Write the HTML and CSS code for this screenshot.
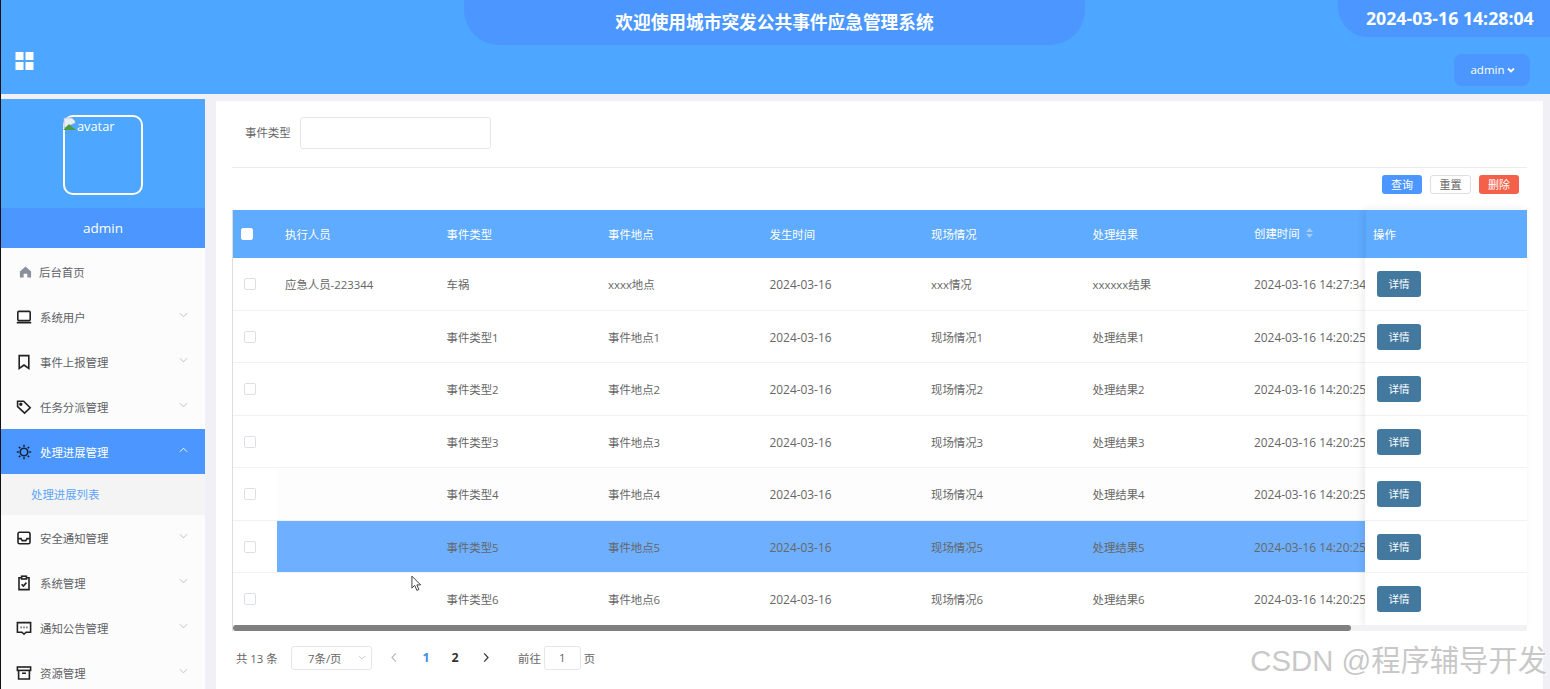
FILE: index.html
```html
<!DOCTYPE html>
<html lang="zh-CN">
<head>
<meta charset="utf-8">
<title>城市突发公共事件应急管理系统</title>
<link rel="stylesheet" href="styles.css">
</head>
<body>
<header class="topbar">
  <div class="top-row">
    <div class="top-spacer"></div>
    <h1 class="title">欢迎使用城市突发公共事件应急管理系统</h1>
    <div class="clock">2024-03-16 14:28:04</div>
  </div>
  <div class="tool-row">
    <svg class="grid-icon" viewBox="0 0 18 18"><rect width="8" height="8" rx=".3"/><rect x="10" width="8" height="8" rx=".3"/><rect y="10" width="8" height="8" rx=".3"/><rect x="10" y="10" width="8" height="8" rx=".3"/></svg>
    <div class="user-btn">admin<svg class="user-caret" viewBox="0 0 10 10"><path d="M2 3.5 5 6.5 8 3.5"/></svg></div>
  </div>
</header>
<div class="body-row">
  <aside class="sidebar">
    <div class="profile">
      <div class="avatar">
        <svg class="broken" viewBox="0 0 14 14"><path d="M1 1h8l3 3v2L1 11z" fill="#e8eef6" stroke="#aab4c0" stroke-width=".7"/><path d="M0 13 6 7l3 3 4 3z" fill="#4f9a3c"/></svg><span>avatar</span>
      </div>
    </div>
    <div class="profile-name">admin</div>
    <nav class="menu">
      <a class="item">
        <svg class="ico home" viewBox="0 0 14 14"><path d="M7 1.2 13 6.4V13H9V9H5v4H1V6.4z" fill="#8a919c"/></svg>
        <span class="lbl">后台首页</span>
      </a>
      <a class="item">
        <svg class="ico" viewBox="0 0 16 16"><rect x="1.800" y="2.400" width="12.400" height="9.200" rx="1"/><path d="M.8 13.600h14.400" stroke-width="1.800"/></svg>
        <span class="lbl">系统用户</span>
        <svg class="chev" viewBox="0 0 10 6"><path d="M1 1 5 5 9 1"/></svg>
      </a>
      <a class="item">
        <svg class="ico" viewBox="0 0 16 16"><path d="M3.200 1.600h9.600v12.800L8 11 3.200 14.400z"/></svg>
        <span class="lbl">事件上报管理</span>
        <svg class="chev" viewBox="0 0 10 6"><path d="M1 1 5 5 9 1"/></svg>
      </a>
      <a class="item">
        <svg class="ico" viewBox="0 0 16 16"><path d="M1.600 2.200h6l6.600 6.600-5.600 5.400-7-6.600z"/><circle cx="4.800" cy="5.200" r=".9"/></svg>
        <span class="lbl">任务分派管理</span>
        <svg class="chev" viewBox="0 0 10 6"><path d="M1 1 5 5 9 1"/></svg>
      </a>
      <a class="item active">
        <svg class="ico" viewBox="0 0 16 16"><circle cx="8" cy="8" r="3.800"/><path d="M8 .8v2M8 13.200v2M.8 8h2M13.200 8h2M2.900 2.900l1.400 1.400M11.700 11.700l1.400 1.400M2.900 13.100l1.400-1.400M11.700 4.300l1.400-1.400"/></svg>
        <span class="lbl">处理进展管理</span>
        <svg class="chev" viewBox="0 0 10 6"><path d="M1 5 5 1 9 5"/></svg>
      </a>
      <a class="subitem">处理进展列表</a>
      <a class="item">
        <svg class="ico" viewBox="0 0 16 16"><rect x="2" y="2.200" width="12" height="11.600" rx="1.600"/><path d="M2 8.600h3l1.200 2h3.600l1.200-2h3"/></svg>
        <span class="lbl">安全通知管理</span>
        <svg class="chev" viewBox="0 0 10 6"><path d="M1 1 5 5 9 1"/></svg>
      </a>
      <a class="item">
        <svg class="ico" viewBox="0 0 16 16"><path d="M5.400 2.800H3v11.800h10V2.800h-2.400"/><rect x="5.600" y="1.200" width="4.800" height="2.800"/><path d="M5.600 9.200 7.400 11l3-3.400"/></svg>
        <span class="lbl">系统管理</span>
        <svg class="chev" viewBox="0 0 10 6"><path d="M1 1 5 5 9 1"/></svg>
      </a>
      <a class="item">
        <svg class="ico" viewBox="0 0 16 16"><path d="M1.400 2.600h13.200v9.600H10L8 14.200 6 12.200H1.400z"/><path d="M4.600 7.400h1M7.500 7.400h1M10.400 7.400h1" stroke-width="1.600"/></svg>
        <span class="lbl">通知公告管理</span>
        <svg class="chev" viewBox="0 0 10 6"><path d="M1 1 5 5 9 1"/></svg>
      </a>
      <a class="item">
        <svg class="ico" viewBox="0 0 16 16"><rect x="1.400" y="2" width="13.200" height="3.400"/><path d="M2.600 5.400V14h10.800V5.400M6 8.200h4"/></svg>
        <span class="lbl">资源管理</span>
        <svg class="chev" viewBox="0 0 10 6"><path d="M1 1 5 5 9 1"/></svg>
      </a>
    </nav>
  </aside>
  <main class="content">
    <form class="filter">
      <label class="filter-label">事件类型</label>
      <div class="filter-input"></div>
    </form>
    <div class="actions">
      <button type="button" class="btn btn-primary">查询</button>
      <button type="button" class="btn btn-plain">重置</button>
      <button type="button" class="btn btn-danger">删除</button>
    </div>
    <section class="table">
      <div class="table-body">
        <div class="scroll-part">
          <div class="tr th">
            <div class="c-check"><span class="cb cb-head"></span></div>
            <div class="td">执行人员</div><div class="td">事件类型</div><div class="td">事件地点</div><div class="td">发生时间</div><div class="td">现场情况</div><div class="td">处理结果</div>
            <div class="td td-sort">创建时间<svg class="sort" viewBox="0 0 8 12"><path d="M4 1 7.500 5H.5zM4 11 .5 7h7z"/></svg></div>
          </div>
          <div class="tr">
            <div class="c-check"><span class="cb"></span></div>
            <div class="td">应急人员-223344</div><div class="td">车祸</div><div class="td">xxxx地点</div><div class="td td-num">2024-03-16</div><div class="td">xxx情况</div><div class="td">xxxxxx结果</div><div class="td td-num">2024-03-16 14:27:34</div>
          </div>
          <div class="tr">
            <div class="c-check"><span class="cb"></span></div>
            <div class="td"></div><div class="td">事件类型1</div><div class="td">事件地点1</div><div class="td td-num">2024-03-16</div><div class="td">现场情况1</div><div class="td">处理结果1</div><div class="td td-num">2024-03-16 14:20:25</div>
          </div>
          <div class="tr">
            <div class="c-check"><span class="cb"></span></div>
            <div class="td"></div><div class="td">事件类型2</div><div class="td">事件地点2</div><div class="td td-num">2024-03-16</div><div class="td">现场情况2</div><div class="td">处理结果2</div><div class="td td-num">2024-03-16 14:20:25</div>
          </div>
          <div class="tr">
            <div class="c-check"><span class="cb"></span></div>
            <div class="td"></div><div class="td">事件类型3</div><div class="td">事件地点3</div><div class="td td-num">2024-03-16</div><div class="td">现场情况3</div><div class="td">处理结果3</div><div class="td td-num">2024-03-16 14:20:25</div>
          </div>
          <div class="tr stripe">
            <div class="c-check"><span class="cb"></span></div>
            <div class="td"></div><div class="td">事件类型4</div><div class="td">事件地点4</div><div class="td td-num">2024-03-16</div><div class="td">现场情况4</div><div class="td">处理结果4</div><div class="td td-num">2024-03-16 14:20:25</div>
          </div>
          <div class="tr hover">
            <div class="c-check"><span class="cb"></span></div>
            <div class="td"></div><div class="td">事件类型5</div><div class="td">事件地点5</div><div class="td td-num">2024-03-16</div><div class="td">现场情况5</div><div class="td">处理结果5</div><div class="td td-num">2024-03-16 14:20:25</div>
          </div>
          <div class="tr">
            <div class="c-check"><span class="cb"></span></div>
            <div class="td"></div><div class="td">事件类型6</div><div class="td">事件地点6</div><div class="td td-num">2024-03-16</div><div class="td">现场情况6</div><div class="td">处理结果6</div><div class="td td-num">2024-03-16 14:20:25</div>
          </div>
        </div>
        <div class="fixed-part">
          <div class="fx th">操作</div>
          <div class="fx"><span class="detail">详情</span></div>
          <div class="fx"><span class="detail">详情</span></div>
          <div class="fx"><span class="detail">详情</span></div>
          <div class="fx"><span class="detail">详情</span></div>
          <div class="fx"><span class="detail">详情</span></div>
          <div class="fx"><span class="detail">详情</span></div>
          <div class="fx"><span class="detail">详情</span></div>
        </div>
      </div>
      <div class="scrollbar"><div class="thumb"></div></div>
    </section>
    <div class="pager">
      <span class="total">共 13 条</span>
      <div class="size">7条/页<svg class="size-caret" viewBox="0 0 10 6"><path d="M1 1 5 5 9 1"/></svg></div>
      <svg class="pg-arrow dim" viewBox="0 0 8 12"><path d="M6 1.500 1.800 6 6 10.500"/></svg>
      <span class="pg pg-on">1</span>
      <span class="pg">2</span>
      <svg class="pg-arrow" viewBox="0 0 8 12"><path d="M2 1.500 6.200 6 2 10.500"/></svg>
      <span class="goto">前往</span>
      <span class="goto-box">1</span>
      <span class="goto-end">页</span>
    </div>
  </main>
</div>
<svg class="cursor" viewBox="0 0 12 18"><path d="M1 1v13l3-3 2.400 5.500 2.200-1L6.400 10.500H10.500z" fill="#fff" stroke="#333" stroke-width="1"/></svg>
<div class="watermark">CSDN @程序辅导开发</div>
</body>
</html>
```
FILE: styles.css
```css
* { box-sizing: border-box; }
html, body { margin: 0; height: 689px; overflow: hidden; }
body {
  position: relative;
  background: #f0f0f6;
  border-left: 1px solid #111;
  font-family: "Open Sans", "Noto Sans CJK SC", sans-serif;
  font-size: 11.4px;
  color: #666;
}
.topbar { height: 94px; background: #4da6ff; color: #fff; }
.top-row { display: grid; grid-template-columns: 463px 621px 1fr; height: 54px; align-items: start; }
.title {
  margin: 0; height: 45px; line-height: 45px; text-align: center;
  background: #4b97ff; border-radius: 0 0 35px 35px;
  font-size: 17.7px; font-weight: 700; color: #fff;
}
.clock {
  justify-self: end; width: 212px; height: 37px; line-height: 36px; padding-left: 28px;
  background: #4b97ff; border-radius: 0 0 0 30px;
  font-family: "Open Sans", sans-serif;
  font-size: 17.7px; font-weight: 700; white-space: nowrap;
}
.tool-row { display: flex; justify-content: space-between; padding: 0 20px 0 14px; }
.grid-icon { width: 19px; height: 18px; margin-top: -2px; fill: #fff; }
.user-btn {
  width: 76px; height: 32px; display: flex; align-items: center; justify-content: center;
  padding: 0 0 2px 2px;
  background: #4b97ff; border-radius: 8px; font-size: 11.5px; color: #fff;
}
.user-caret { width: 10px; height: 10px; fill: none; stroke: #fff; stroke-width: 1.8; margin: 2px 0 0 1px; }

.body-row { display: flex; height: 595px; padding-top: 5px; }
.sidebar { width: 204px; flex: none; background: #fcfcfc; overflow: hidden; }
.profile { height: 109px; background: #4da6ff; padding: 16px 0 0 62px; }
.avatar {
  width: 80px; height: 80px; border: 2px solid #fff; border-radius: 10px;
  display: flex; align-items: flex-start; color: #fff; font-size: 12.8px; line-height: 18px;
}
.broken { width: 14px; height: 14px; flex: none; margin: 0 0 0 -2px; }
.profile-name { height: 40px; line-height: 40px; text-align: center; background: #4b97ff; color: #fff; font-size: 13.5px; }
.menu { padding-top: 1px; }
.item { height: 45px; display: flex; align-items: center; padding-left: 15px; position: relative; color: #606266; }
.item .lbl { margin-left: 8px; }
.ico { width: 16px; height: 16px; flex: none; fill: none; stroke: #222; stroke-width: 1.6; }
.ico.home { stroke: none; margin-left: 3px; width: 13px; height: 14px; margin-right: -1px; }
.chev { width: 9px; height: 6px; fill: none; stroke: #bbb; stroke-width: 1; margin-left: auto; margin-right: 17px; margin-top: -4px; }
.item.active { background: #4b97ff; color: #fff; }
.item.active .chev { stroke: #fff; }
.item.active .ico { stroke: #10243f; }
.subitem { display: block; height: 41px; line-height: 41px; padding-left: 30px; background: #f4f4f4; color: #5ea6f7; }

.content { width: 1327px; margin: 2px 0 0 11px; background: #fff; padding: 0 16px; position: relative; }
.filter { height: 67px; padding-top: 16px; display: flex; align-items: flex-start; border-bottom: 1px solid #ececec; }
.filter-label { margin-left: 13px; line-height: 32px; }
.filter-input { width: 191px; height: 32px; margin-left: 9px; border: 1px solid #e4e7ed; border-radius: 3px; }
.actions { display: flex; justify-content: flex-end; gap: 8px; padding: 7px 8px 0 0; height: 42px; }
.btn { width: 40px; height: 19px; padding: 0; border: 1px solid transparent; border-radius: 3px; font: inherit; font-size: 11px; line-height: 16px; }
.btn-primary { background: #4b97ff; color: #fff; }
.btn-plain { background: #fff; border-color: #dcdfe6; color: #666; width: 41px; }
.btn-danger { background: #f5604a; color: #fff; }

.table { width: 1295px; border-left: 1px solid #ddd; }
.table-body { display: flex; }
.scroll-part { width: 1132px; flex: none; overflow: hidden; }
.tr { display: flex; height: 52.5px; align-items: stretch; border-bottom: 1px solid #f0f2f5; }
.tr.th { height: 48px; background: #5fabff; color: #fff; border-bottom: 0; }
.tr.stripe { background: #fdfdfd; }
.tr.hover { background: #6eb0ff; }
.tr:not(.th) .td, .tr:not(.th) .c-check, .fx:not(.th) { padding-top: 1px; }
.c-check { width: 44px; flex: none; display: flex; align-items: center; padding-left: 11px; background: #fff; }
.th .c-check { background: transparent; padding-left: 8px; }
.cb { width: 12px; height: 12px; border: 1px solid #dcdfe6; border-radius: 2px; background: #fff; }
.cb-head { border-color: #fff; width: 12px; height: 12px; }
.td { width: 161.5px; flex: none; padding-left: 8px; display: flex; align-items: center; white-space: nowrap; }
.td-num { font-size: 11.9px; }
.td-sort { padding-bottom: 2px; }
.sort { width: 9px; height: 12px; margin-left: 5px; fill: #a5cbf6; }
.fixed-part { width: 162px; flex: none; box-shadow: -2px 0 8px rgba(0,0,0,.08); background: #fff; position: relative; }
.fx { height: 52.5px; display: flex; align-items: center; padding-left: 12px; border-bottom: 1px solid #f0f2f5; }
.fx.th { height: 48px; background: #5fabff; color: #fff; padding-left: 7px; border-bottom: 0; border-left: 1px solid #58a2f5; }
.detail {
  width: 44px; height: 26px; line-height: 26px; text-align: center;
  background: #44799f; border-radius: 3px; color: #fff; font-size: 10.5px;
}
.scrollbar { height: 6px; background: #f2f2f4; margin-top: -1px; position: relative; }
.thumb { width: 1118px; height: 6px; background: #808080; border-radius: 3px; }

.pager { display: flex; align-items: center; height: 54px; padding-left: 4px; }
.total { width: 55px; }
.size {
  width: 81px; height: 24px; display: flex; align-items: center; padding-left: 16px;
  border: 1px solid #e4e7ed; border-radius: 3px;
}
.size-caret { width: 8px; height: 5px; margin-left: auto; margin-right: 5px; fill: none; stroke: #c0c4cc; stroke-width: 1; }
.pg-arrow { width: 8px; height: 11px; fill: none; stroke: #333; stroke-width: 1.3; }
.pg-arrow.dim { stroke: #bbb; margin-left: 18px; }
.pg { font-weight: 700; color: #333; font-size: 12.5px; width: 10px; text-align: center; }
.pg-on { color: #3f8fe8; margin-left: 23px; }
.pg + .pg { margin-left: 19px; }
.pg + .pg-arrow { margin-left: 22px; }
.goto { margin-left: 28px; }
.goto-box {
  width: 37px; height: 24px; line-height: 22px; text-align: center; margin-left: 3px;
  border: 1px solid #e4e7ed; border-radius: 3px;
}
.goto-end { margin-left: 3px; }

.cursor { position: absolute; left: 410px; top: 575px; width: 11px; height: 17px; }
.watermark {
  position: absolute; right: 3px; top: 643px;
  font-family: "Liberation Sans", "Noto Sans CJK SC", sans-serif;
  font-size: 29.3px; line-height: 36px; color: rgba(175,175,175,.7);
  text-shadow: 1px 1px 1px rgba(255,255,255,.8); white-space: nowrap;
}
```
